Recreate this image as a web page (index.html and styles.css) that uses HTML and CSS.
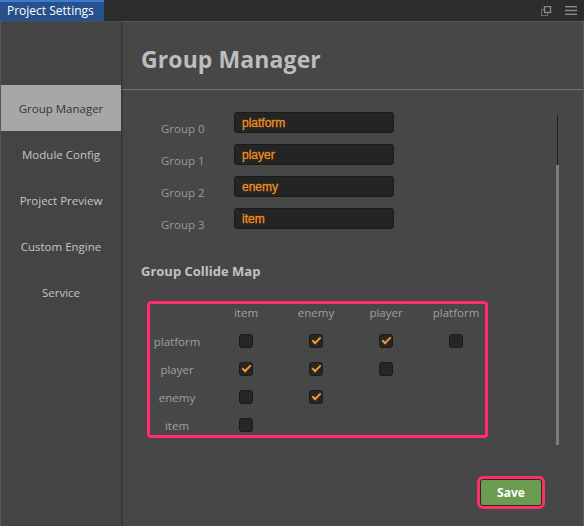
FILE: index.html
```html
<!DOCTYPE html>
<html lang="en">
<head>
    <meta charset="UTF-8">
    <title>Project Settings</title>
    <link rel="stylesheet" href="styles.css">
</head>
<body>
    <div class="titlebar">
        <div class="tab">Project Settings</div>
        <div class="window-icons">
            <svg width="11" height="10" viewBox="0 0 11 10"><rect x="0.5" y="3.5" width="6" height="6" fill="none" stroke="#6a6a6a"/><rect x="3.5" y="0.5" width="6" height="6" fill="#2c2c2c" stroke="#8a8a8a" stroke-width="1.4"/></svg>
            <svg width="12" height="9" viewBox="0 0 12 9"><rect x="0" y="0" width="12" height="1.4" fill="#8a8a8a"/><rect x="0" y="3.8" width="12" height="1.4" fill="#8a8a8a"/><rect x="0" y="7.6" width="12" height="1.4" fill="#8a8a8a"/></svg>
        </div>
    </div>
    <div class="window">
        <div class="left-sidebar">
            <div class="nav-item active">Group Manager</div>
            <div class="nav-item">Module Config</div>
            <div class="nav-item">Project Preview</div>
            <div class="nav-item">Custom Engine</div>
            <div class="nav-item">Service</div>
        </div>
        <div class="main-content">
            <div class="title">Group Manager</div>
            <div class="body">
                <div class="scroll-content">
                    <div class="group-list">
                        <div class="group-label">Group 0</div>
                        <div class="group-input">platform</div>
                        <div class="group-label">Group 1</div>
                        <div class="group-input">player</div>
                        <div class="group-label">Group 2</div>
                        <div class="group-input">enemy</div>
                        <div class="group-label">Group 3</div>
                        <div class="group-input">item</div>
                    </div>
                    <div class="subtitle">Group Collide Map</div>
                    <div class="collide-map">
                        <div></div>
                        <div class="col-head">item</div>
                        <div class="col-head">enemy</div>
                        <div class="col-head">player</div>
                        <div class="col-head">platform</div>

                        <div class="row-head">platform</div>
                        <div class="cell"><span class="check"></span></div>
                        <div class="cell"><span class="check on"></span></div>
                        <div class="cell"><span class="check on"></span></div>
                        <div class="cell"><span class="check"></span></div>

                        <div class="row-head">player</div>
                        <div class="cell"><span class="check on"></span></div>
                        <div class="cell"><span class="check on"></span></div>
                        <div class="cell"><span class="check"></span></div>
                        <div></div>

                        <div class="row-head">enemy</div>
                        <div class="cell"><span class="check"></span></div>
                        <div class="cell"><span class="check on"></span></div>
                        <div></div>
                        <div></div>

                        <div class="row-head">item</div>
                        <div class="cell"><span class="check"></span></div>
                        <div></div>
                        <div></div>
                        <div></div>
                    </div>
                </div>
                <div class="scrollbar"><div class="thumb"></div></div>
            </div>
            <div class="footer">
                <button class="save">Save</button>
            </div>
        </div>
    </div>
</body>
</html>
```

FILE: styles.css
```css
body {
    margin: 0;
    width: 584px;
    height: 526px;
    background-color: #474747;
    font-family: "Open Sans", "Noto Sans", sans-serif;
    font-size: 11.5px;
    overflow: hidden;
}
.titlebar {
    height: 21px;
    background-color: #2c2c2c;
    border-bottom: 1px solid #575757;
    display: flex;
    justify-content: space-between;
    align-items: center;
}
.tab {
    width: 104px;
    height: 21px;
    box-sizing: border-box;
    background-color: #26518c;
    border-top: 2px solid #3c7ad0;
    color: #ffffff;
    padding-left: 7px;
    line-height: 18px;
    font-size: 12px;
}
.window-icons {
    display: flex;
    align-items: center;
    gap: 13px;
    padding-right: 7px;
}
.window {
    display: flex;
    height: 504px;
    border-left: 1px solid #5a5a5a;
    border-right: 1px solid #5a5a5a;
    border-bottom: 1px solid #5a5a5a;
}
.left-sidebar {
    width: 120px;
    background-color: #444444;
    padding-top: 63px;
    box-shadow: 1px 0 2px rgba(0, 0, 0, 0.35);
    z-index: 1;
}
.nav-item {
    height: 46px;
    display: flex;
    align-items: center;
    justify-content: center;
    color: #c4c4c4;
}
.nav-item.active {
    background-color: #a7a7a7;
    color: #363636;
}
.main-content {
    flex-grow: 1;
    display: flex;
    flex-direction: column;
    background-color: #474747;
}
.title {
    height: 68px;
    box-sizing: border-box;
    border-bottom: 1px solid #727272;
    padding: 21px 0 0 20px;
    font-size: 23px;
    font-weight: bold;
    color: #bdbdbd;
    letter-spacing: 0.1px;
}
.body {
    display: flex;
    height: 362px;
}
.scroll-content {
    flex-grow: 1;
    padding: 22px 0 0 20px;
}
.scrollbar {
    width: 3px;
    margin: 25px 24px 0 0;
    display: flex;
    flex-direction: column;
}
.scrollbar::before {
    content: '';
    display: block;
    width: 1px;
    height: 50px;
    margin-left: 1px;
    background-color: #1e1e1e;
}
.thumb {
    height: 280px;
    background-color: #7c7c7c;
}
.group-list {
    display: grid;
    grid-template-columns: 73px 160px;
    grid-auto-rows: 32px;
    padding-left: 20px;
}
.group-label {
    color: #9a9a9a;
    padding-top: 9px;
}
.group-input {
    height: 21px;
    box-sizing: border-box;
    background-color: #242424;
    border: 1px solid #1a1a1a;
    border-radius: 3px;
    color: #f0901e;
    font-family: "Liberation Sans", Arial, sans-serif;
    font-size: 12px;
    -webkit-text-stroke: 0.3px #f0901e;
    line-height: 20px;
    padding-left: 7px;
}
.subtitle {
    margin-top: 22px;
    font-size: 13px;
    font-weight: bold;
    color: #c2c2c2;
}
.collide-map {
    margin: 21px 0 0 6px;
    width: 341px;
    height: 137px;
    box-sizing: border-box;
    border: 3px solid #ff2d68;
    border-radius: 4px;
    display: grid;
    grid-template-columns: 61px repeat(4, 70px);
    grid-template-rows: 23px repeat(4, 28px);
    color: #a0a0a0;
}
.col-head {
    text-align: center;
    line-height: 18px;
}
.row-head {
    display: flex;
    align-items: center;
    justify-content: center;
    padding-right: 7px;
}
.cell {
    display: flex;
    align-items: center;
    justify-content: center;
}
.check {
    width: 14px;
    height: 14px;
    box-sizing: border-box;
    background-color: #262626;
    border: 1px solid #1b1b1b;
    border-radius: 3px;
    position: relative;
}
.check.on::after {
    content: '';
    position: absolute;
    top: 2px;
    left: 2px;
    width: 7px;
    height: 3px;
    border-left: 2.5px solid #f59a2a;
    border-bottom: 2.5px solid #f59a2a;
    transform: rotate(-45deg);
}
.footer {
    display: flex;
    justify-content: flex-end;
    padding: 27px 41px 0 0;
}
.save {
    width: 62px;
    height: 27px;
    background-color: #6a9d50;
    border: 1px solid #2b2b2b;
    border-radius: 3px;
    outline: 3px solid #ff2d68;
    outline-offset: 0;
    color: #ffffff;
    font-family: "Open Sans", sans-serif;
    font-weight: bold;
    font-size: 12px;
    padding: 0;
}
```
